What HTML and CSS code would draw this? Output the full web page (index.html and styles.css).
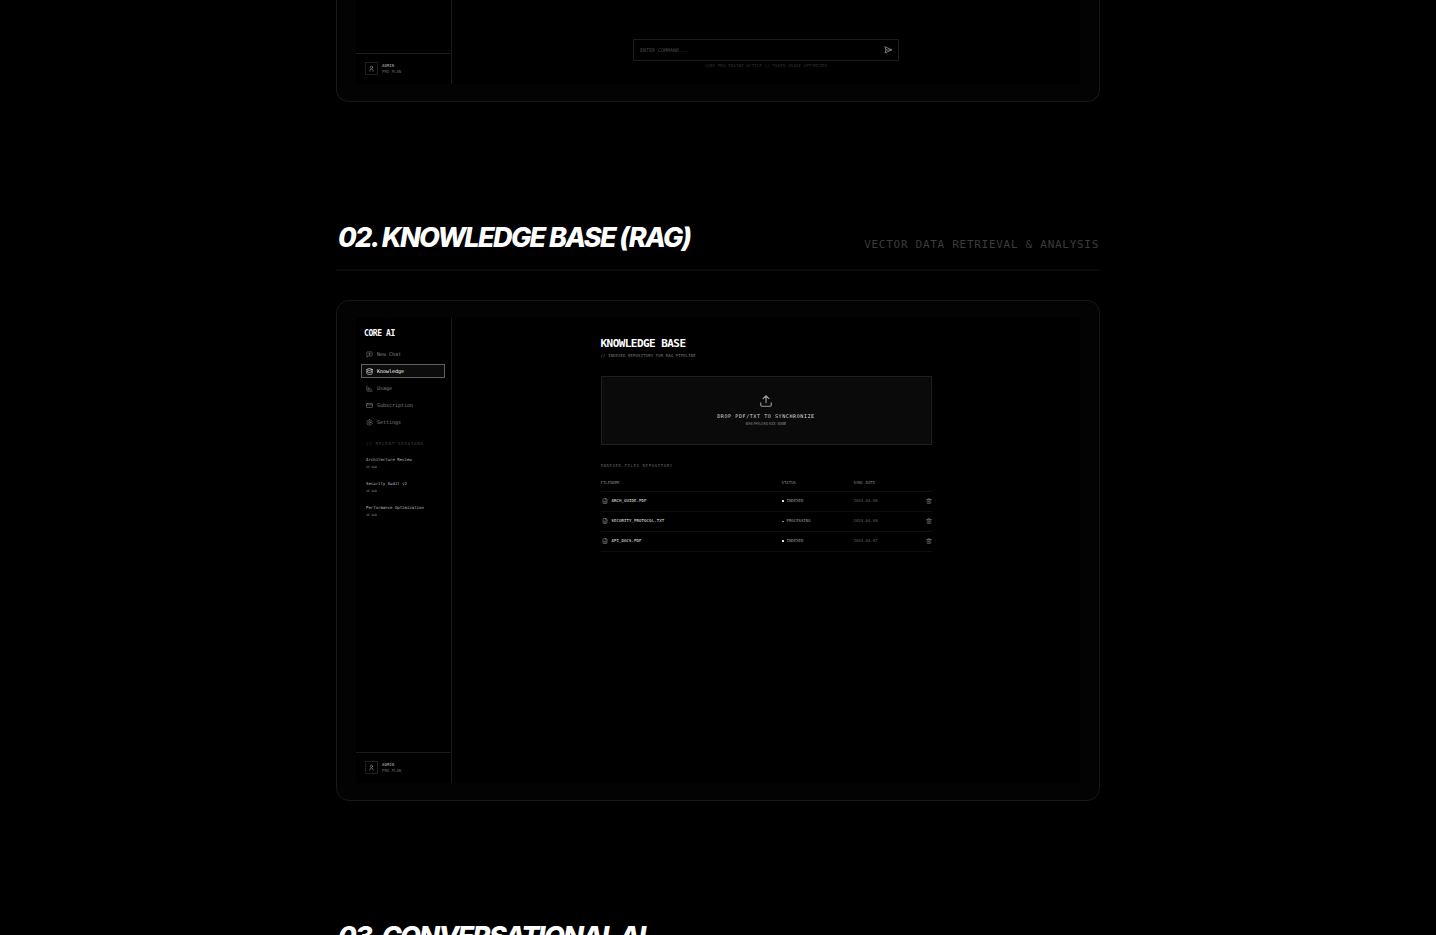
FILE: index.html
```
<!DOCTYPE html>
<html lang="en">
<head>
<meta charset="utf-8">
<title>Core AI</title>
<link rel="stylesheet" href="styles.css">
</head>
<body>
<svg class="sprite" aria-hidden="true">
  <symbol id="chat" viewBox="0 0 24 24"><path d="M21 15a2 2 0 0 1-2 2H7l-4 4V5a2 2 0 0 1 2-2h14a2 2 0 0 1 2 2zM12 7v6M9 10h6"/></symbol>
  <symbol id="database" viewBox="0 0 24 24"><ellipse cx="12" cy="5" rx="9" ry="3"/><path d="M3 5v14a9 3 0 0 0 18 0V5M3 12a9 3 0 0 0 18 0"/></symbol>
  <symbol id="chart" viewBox="0 0 24 24"><path d="M3 3v16a2 2 0 0 0 2 2h16M8 17V9M13 17v-6M18 17v-3"/></symbol>
  <symbol id="card" viewBox="0 0 24 24"><rect x="2" y="5" width="20" height="14" rx="2"/><path d="M2 10h20"/></symbol>
  <symbol id="gear" viewBox="0 0 24 24"><path d="M12.22 2h-.44a2 2 0 0 0-2 2v.18a2 2 0 0 1-1 1.73l-.43.25a2 2 0 0 1-2 0l-.15-.08a2 2 0 0 0-2.73.73l-.22.38a2 2 0 0 0 .73 2.73l.15.1a2 2 0 0 1 1 1.72v.51a2 2 0 0 1-1 1.74l-.15.09a2 2 0 0 0-.73 2.73l.22.38a2 2 0 0 0 2.73.73l.15-.08a2 2 0 0 1 2 0l.43.25a2 2 0 0 1 1 1.73V20a2 2 0 0 0 2 2h.44a2 2 0 0 0 2-2v-.18a2 2 0 0 1 1-1.73l.43-.25a2 2 0 0 1 2 0l.15.08a2 2 0 0 0 2.73-.73l.22-.39a2 2 0 0 0-.73-2.73l-.15-.08a2 2 0 0 1-1-1.74v-.5a2 2 0 0 1 1-1.74l.15-.09a2 2 0 0 0 .73-2.73l-.22-.38a2 2 0 0 0-2.73-.73l-.15.08a2 2 0 0 1-2 0l-.43-.25a2 2 0 0 1-1-1.73V4a2 2 0 0 0-2-2z"/><circle cx="12" cy="12" r="3"/></symbol>
  <symbol id="user" viewBox="0 0 24 24"><circle cx="12" cy="8" r="4"/><path d="M18 21a6 7 0 0 0-12 0"/></symbol>
  <symbol id="upload" viewBox="0 0 24 24"><path d="M21 15v4a2 2 0 0 1-2 2H5a2 2 0 0 1-2-2v-4M17 8l-5-5-5 5M12 3v12"/></symbol>
  <symbol id="file" viewBox="0 0 24 24"><path d="M15 2H6a2 2 0 0 0-2 2v16a2 2 0 0 0 2 2h12a2 2 0 0 0 2-2V7zM14 2v4a2 2 0 0 0 2 2h4M8 13h8M8 17h8"/></symbol>
  <symbol id="trash" viewBox="0 0 24 24"><path d="M3 6h18M19 6v14a2 2 0 0 1-2 2H7a2 2 0 0 1-2-2V6M8 6V4a2 2 0 0 1 2-2h4a2 2 0 0 1 2 2v2M10 11v6M14 11v6"/></symbol>
  <symbol id="send" viewBox="0 0 24 24"><path d="m3 3 3 9-3 9 19-9ZM6 12h16"/></symbol>
</svg>
<main class="page">
  <section class="frame frame-tail">
    <div class="app">
      <aside class="sidebar">
        <div class="account">
          <span class="avatar"><svg class="icon"><use href="#user"/></svg></span>
          <div><div class="name">ADMIN</div><div class="plan">PRO PLAN</div></div>
        </div>
      </aside>
      <div class="chat">
        <form class="prompt">
          <input class="command" type="text" aria-label="Command" placeholder="ENTER COMMAND...">
          <button class="send" type="button" aria-label="Send"><svg class="icon"><use href="#send"/></svg></button>
        </form>
        <p class="engine">CORE PRO ENGINE ACTIVE // TOKEN USAGE OPTIMIZED</p>
      </div>
    </div>
  </section>

  <section class="feature">
    <header class="feature-head">
      <h2>02. KNOWLEDGE BASE (RAG)</h2>
      <p>VECTOR DATA RETRIEVAL &amp; ANALYSIS</p>
    </header>
    <div class="frame">
      <div class="app">
        <aside class="sidebar">
          <div class="brand">CORE AI</div>
          <nav class="nav">
            <a href="#new-chat"><svg class="icon"><use href="#chat"/></svg>New Chat</a>
            <a class="active" href="#knowledge"><svg class="icon"><use href="#database"/></svg>Knowledge</a>
            <a href="#usage"><svg class="icon"><use href="#chart"/></svg>Usage</a>
            <a href="#subscription"><svg class="icon"><use href="#card"/></svg>Subscription</a>
            <a href="#settings"><svg class="icon"><use href="#gear"/></svg>Settings</a>
          </nav>
          <div class="recent">
            <h4>// RECENT SESSIONS</h4>
            <ul>
              <li><span class="session">Architecture Review</span><span class="ago">2H AGO</span></li>
              <li><span class="session">Security Audit v2</span><span class="ago">1D AGO</span></li>
              <li><span class="session">Performance Optimization</span><span class="ago">3D AGO</span></li>
            </ul>
          </div>
          <div class="account">
            <span class="avatar"><svg class="icon"><use href="#user"/></svg></span>
            <div><div class="name">ADMIN</div><div class="plan">PRO PLAN</div></div>
          </div>
        </aside>
        <div class="content">
          <div class="column">
            <h3>KNOWLEDGE BASE</h3>
            <p class="lead">// INDEXED REPOSITORY FOR RAG PIPELINE</p>
            <button class="dropzone" type="button">
              <svg class="icon"><use href="#upload"/></svg>
              <span class="drop-title">DROP PDF/TXT TO SYNCHRONIZE</span>
              <span class="drop-note">MAX PAYLOAD SIZE: 50MB</span>
            </button>
            <h4 class="repo-title">INDEXED FILES REPOSITORY</h4>
            <table class="files">
              <thead>
                <tr><th class="col-name">FILENAME</th><th class="col-status">STATUS</th><th>SYNC DATE</th><th class="col-action"></th></tr>
              </thead>
              <tbody>
                <tr>
                  <td><span class="file"><svg class="icon"><use href="#file"/></svg>ARCH_GUIDE.PDF</span></td>
                  <td><span class="status">INDEXED</span></td><td class="date">2024.04.08</td>
                  <td><button class="remove" type="button" aria-label="Delete ARCH_GUIDE.PDF"><svg class="icon"><use href="#trash"/></svg></button></td>
                </tr>
                <tr>
                  <td><span class="file"><svg class="icon"><use href="#file"/></svg>SECURITY_PROTOCOL.TXT</span></td>
                  <td><span class="status pending">PROCESSING</span></td><td class="date">2024.04.08</td>
                  <td><button class="remove" type="button" aria-label="Delete SECURITY_PROTOCOL.TXT"><svg class="icon"><use href="#trash"/></svg></button></td>
                </tr>
                <tr>
                  <td><span class="file"><svg class="icon"><use href="#file"/></svg>API_DOCS.PDF</span></td>
                  <td><span class="status">INDEXED</span></td><td class="date">2024.04.07</td>
                  <td><button class="remove" type="button" aria-label="Delete API_DOCS.PDF"><svg class="icon"><use href="#trash"/></svg></button></td>
                </tr>
              </tbody>
            </table>
          </div>
        </div>
      </div>
    </div>
  </section>

  <section class="feature">
    <header class="feature-head"><h2>03. CONVERSATIONAL AI</h2></header>
  </section>
</main>
</body>
</html>
```
FILE: styles.css
```
* { box-sizing: border-box; margin: 0; padding: 0; }
html { background: #000; }
body {
  height: 100vh;
  overflow: hidden;
  background: #000;
  color: #fff;
  font-family: "DejaVu Sans Mono", "Liberation Mono", monospace;
}
button, input { font: inherit; color: inherit; background: none; border: 0; border-radius: 0; }
ul { list-style: none; }
a { color: inherit; text-decoration: none; }
.sprite { display: none; }
.icon {
  display: block;
  flex: none;
  width: 7px;
  height: 7px;
  fill: none;
  stroke: currentColor;
  stroke-width: 2;
  stroke-linecap: round;
  stroke-linejoin: round;
}

.page { max-width: 764px; margin: 0 auto; }

/* Section headings */
.feature { margin-top: 120px; }
.feature-head {
  display: flex;
  justify-content: space-between;
  align-items: flex-end;
  padding: 0 1px 15px 2px;
  margin-bottom: 29px;
  border-bottom: 2px solid #0a0a0a;
}
.feature-head h2 {
  font: italic 800 27px/32px Inter, sans-serif;
  letter-spacing: -0.06em;
  white-space: nowrap;
}
.feature-head p {
  font-size: 11px;
  line-height: 18px;
  letter-spacing: 0.065em;
  color: #3c3c3c;
}

/* Device frame */
.frame {
  padding: 17px 19px;
  border: 1px solid #181818;
  border-radius: 13px;
  background: #030303;
}
.frame-tail { padding-top: 0; border-top: 0; border-radius: 0 0 13px 13px; }
.app { display: flex; min-height: 465px; background: #000; }
.frame-tail .app { min-height: 84px; }

/* Sidebar */
.sidebar {
  display: flex;
  flex-direction: column;
  flex: none;
  width: 96px;
  border-right: 1px solid #1a1a1a;
}
.brand {
  padding: 10px 8px 7px;
  font-size: 8px;
  font-weight: 700;
  line-height: 12px;
  letter-spacing: -0.05em;
}
.nav { display: grid; gap: 3px; padding: 0 6px 0 5px; }
.nav a {
  display: flex;
  align-items: center;
  gap: 4px;
  height: 14px;
  padding: 0 4px;
  border: 1px solid transparent;
  font-size: 5px;
  color: #808080;
}
.nav .active { border-color: #606060; background: #0c0c0c; color: #fff; }
.recent { padding: 12px 10px 0; }
h4 { font-weight: 400; font-size: 4px; line-height: 6px; color: #444; }
.recent h4 { letter-spacing: 0.2em; white-space: nowrap; }
.recent ul { display: grid; gap: 11px; margin-top: 10px; }
.session { display: block; font-size: 4px; line-height: 6px; color: #bbb; white-space: nowrap; }
.ago { display: block; margin-top: 2px; font-size: 3px; line-height: 5px; color: #888; }
.account {
  display: flex;
  align-items: center;
  gap: 4px;
  margin-top: auto;
  padding: 8px 9px 9px;
  border-top: 1px solid #1c1c1c;
}
.avatar { display: grid; place-items: center; width: 13px; height: 13px; border: 1px solid #202020; color: #999; }
.name { font-size: 4px; font-weight: 700; line-height: 6px; color: #888; }
.plan { font-size: 4px; line-height: 6px; color: #666; }

/* Chat prompt */
.chat {
  display: flex;
  flex-direction: column;
  justify-content: flex-end;
  align-items: center;
  flex: 1;
  padding-bottom: 15px;
}
.prompt {
  display: flex;
  align-items: center;
  width: 100%;
  max-width: 266px;
  height: 22px;
  padding: 0 6px;
  border: 1px solid #1c1c1c;
}
.command { flex: 1; height: 20px; font-size: 5px; outline: 0; }
.command::placeholder { color: #484848; opacity: 1; }
.send .icon { width: 8px; height: 8px; color: #aaa; }
.engine { margin-top: 2px; font-size: 4px; line-height: 6px; letter-spacing: 0.05em; color: #333; }

/* Knowledge base */
.content { flex: 1; padding-top: 19px; }
.column { max-width: 331px; margin: 0 auto; }
.column h3 { font-size: 11px; line-height: 14px; letter-spacing: -0.05em; }
.lead { margin-top: 2px; font-size: 4px; line-height: 6px; letter-spacing: 0.025em; color: #777; }
.dropzone {
  display: flex;
  flex-direction: column;
  align-items: center;
  width: 100%;
  margin-top: 17px;
  padding: 17px 0;
  border: 1px solid #1e1e1e;
  background: #0a0a0a;
}
.dropzone .icon { width: 14px; height: 14px; color: #999; }
.drop-title { margin-top: 4px; font-size: 5px; line-height: 8px; letter-spacing: 0.12em; color: #ddd; }
.drop-note { margin-top: 1px; font: 3px/6px Inter, sans-serif; letter-spacing: 0.025em; color: #999; }
.repo-title { margin-top: 18px; letter-spacing: 0.15em; color: #666; }

.files { width: 100%; margin-top: 4px; border-collapse: collapse; table-layout: fixed; }
.files th, .files td { border-bottom: 1px solid #0e0e0e; text-align: left; vertical-align: middle; font-size: 4px; line-height: 6px; }
.files th { height: 18px; padding-top: 2px; font-weight: 400; color: #808080; }
.files td { height: 20px; }
.col-name { width: 181px; }
.col-status { width: 72px; }
.col-action { width: 6px; }
.file { display: flex; align-items: center; gap: 4px; padding-left: 1px; letter-spacing: 0.025em; color: #eee; }
.file .icon { width: 6px; height: 6px; color: #999; }
.status { display: flex; align-items: center; gap: 3px; color: #999; }
.status::before { content: ""; width: 2px; height: 2px; background: #ddd; }
.pending::before { height: 1px; background: #888; }
.files .date { color: #606060; }
.remove { display: block; }
.remove .icon { width: 6px; height: 6px; color: #888; }
```
